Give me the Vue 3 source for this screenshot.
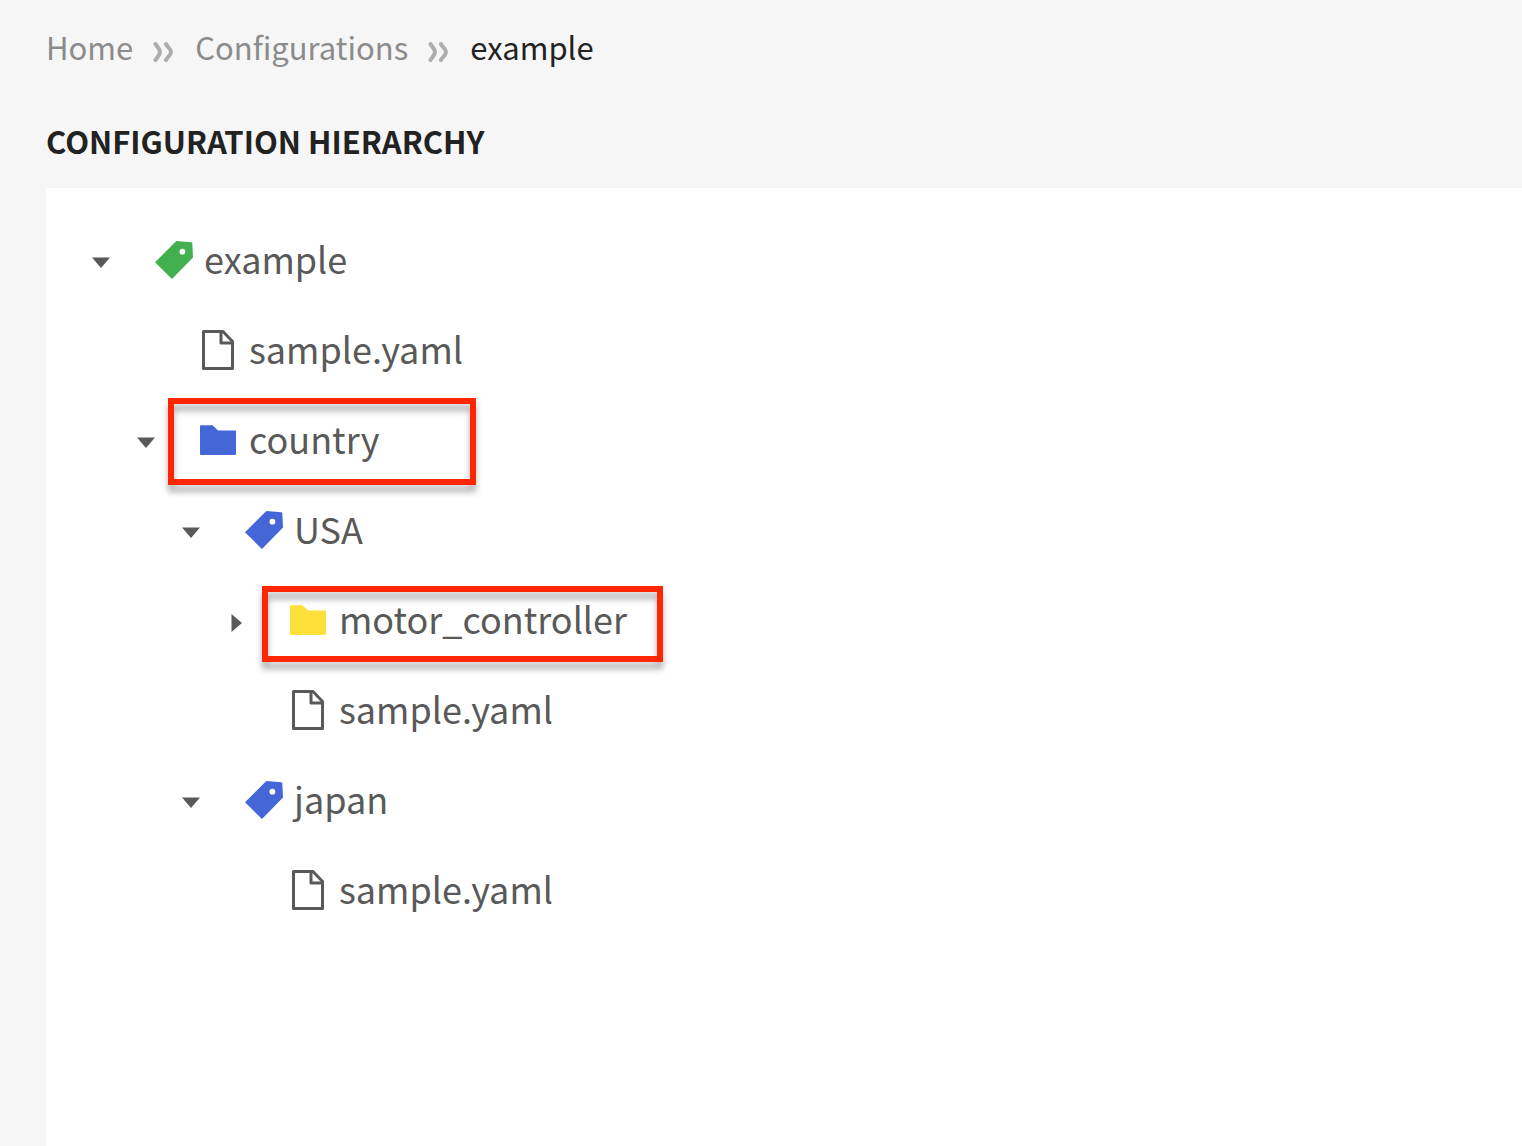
<script setup>
import { computed, reactive } from 'vue'

const nodes = [
  { id: 'example', parent: null, depth: 0, kind: 'tag', tone: 'green', label: 'example' },
  { id: 'root-file', parent: 'example', depth: 1, kind: 'file', label: 'sample.yaml' },
  { id: 'country', parent: 'example', depth: 1, kind: 'folder', tone: 'blue', label: 'country', mark: 'tall' },
  { id: 'usa', parent: 'country', depth: 2, kind: 'tag', tone: 'blue', label: 'USA' },
  { id: 'motor', parent: 'usa', depth: 3, kind: 'folder', tone: 'yellow', label: 'motor_controller', mark: 'wide' },
  { id: 'usa-file', parent: 'usa', depth: 3, kind: 'file', label: 'sample.yaml' },
  { id: 'japan', parent: 'country', depth: 2, kind: 'tag', tone: 'blue', label: 'japan' },
  { id: 'japan-file', parent: 'japan', depth: 3, kind: 'file', label: 'sample.yaml' }
]

const open = reactive({ example: true, country: true, usa: true, motor: false, japan: true })
const byId = Object.fromEntries(nodes.map((n) => [n.id, n]))

function isVisible(node) {
  return node.parent === null || (open[node.parent] && isVisible(byId[node.parent]))
}

const visible = computed(() => nodes.filter(isVisible))
</script>

<template>
  <div class="page">
    <nav class="crumbs" aria-label="Breadcrumb">
      <a href="#home">Home</a>
      <svg class="chevrons" viewBox="0 0 22 22" aria-hidden="true">
        <path d="M2.500 3 C4 6 7 8 7 11 C7 14 4 16 2.500 19 M13 3 C14.500 6 18 8 18 11 C18 14 14.500 16 13 19" />
      </svg>
      <a href="#configurations">Configurations</a>
      <svg class="chevrons" viewBox="0 0 22 22" aria-hidden="true">
        <path d="M2.500 3 C4 6 7 8 7 11 C7 14 4 16 2.500 19 M13 3 C14.500 6 18 8 18 11 C18 14 14.500 16 13 19" />
      </svg>
      <span class="current" aria-current="page">example</span>
    </nav>

    <h1>CONFIGURATION HIERARCHY</h1>

    <main class="panel">
      <ul class="tree" role="tree" aria-label="Configuration hierarchy">
        <li
          v-for="node in visible"
          :key="node.id"
          class="row"
          role="treeitem"
          :aria-level="node.depth + 1"
          :aria-expanded="node.kind === 'file' ? undefined : open[node.id]"
          :style="{ paddingLeft: node.depth * 45 + 'px' }"
        >
          <span class="slot">
            <button
              v-if="node.kind !== 'file'"
              type="button"
              class="toggle"
              :aria-label="'Toggle ' + node.label"
              @click="open[node.id] = !open[node.id]"
            >
              <svg viewBox="0 0 32 32" aria-hidden="true">
                <path v-if="open[node.id]" d="M7 11.5 H25 L16 22 Z" />
                <path v-else d="M11.500 8 L22 17 L11.500 26 Z" />
              </svg>
            </button>
          </span>
          <span class="item">
            <svg class="icon" :class="node.tone" viewBox="0 0 40 40" aria-hidden="true">
              <path
                v-if="node.kind === 'tag'"
                fill-rule="evenodd"
                d="M22.300 1 L37.300 2.200 Q38.200 2.300 38.300 3.200 L39 17.500 L18 39 L1 22.300 Z M28.400 8.800 a2.900 2.900 0 1 0 0 5.800 a2.900 2.900 0 1 0 0 -5.800 Z"
              />
              <path
                v-else-if="node.kind === 'folder'"
                d="M2 5.300 H13.500 L19 10.500 H36 Q37 10.500 37 11.500 V34 Q37 35 36 35 H2 Q1 35 1 34 V6.300 Q1 5.300 2 5.300 Z"
              />
              <g v-else class="outline">
                <path d="M4.500 1.500 H24 L33.500 11.500 V38.500 H4.500 Z" />
                <path d="M22 1.500 V13 H33.500" />
              </g>
            </svg>
            <span class="label">{{ node.label }}</span>
            <span v-if="node.mark" class="mark" :class="node.mark"></span>
          </span>
        </li>
      </ul>
    </main>
  </div>
</template>

<style>
body {
  margin: 0;
  background: #f6f6f6;
}
</style>

<style scoped>
.page {
  display: flex;
  flex-direction: column;
  box-sizing: border-box;
  min-height: 100vh;
  padding-left: 46px;
  font-family: "Noto Sans CJK SC", "Noto Sans", sans-serif;
  color: #222;
}

.crumbs {
  display: flex;
  align-items: center;
  gap: 20px;
  padding-top: 23px;
  font-size: 31px;
  line-height: 48px;
}

.crumbs a {
  color: #8b8b8b;
  text-decoration: none;
}

.chevrons {
  width: 22px;
  height: 22px;
  margin-top: 9px;
  fill: none;
  stroke: #adadad;
  stroke-width: 4;
  stroke-linecap: round;
}

h1 {
  margin: 46px 0 23px;
  font-size: 31px;
  line-height: 48px;
  font-weight: 700;
}

.panel {
  flex: 1;
  padding: 29px 0 28px 39px;
  background: #fff;
}

.tree {
  margin: 0;
  padding: 0;
  list-style: none;
}

.row {
  display: flex;
  align-items: center;
  gap: 37px;
  height: 90px;
}

.slot {
  flex: none;
  width: 32px;
  height: 32px;
}

.toggle {
  display: block;
  width: 32px;
  height: 32px;
  padding: 0;
  border: 0;
  background: none;
  cursor: pointer;
}

.toggle svg {
  display: block;
  width: 32px;
  height: 32px;
  fill: #595959;
}

.item {
  position: relative;
  display: flex;
  align-items: center;
  gap: 10px;
  height: 90px;
}

.icon {
  flex: none;
  width: 40px;
  height: 40px;
  margin-bottom: 4px;
}

.green { fill: #42b04f; }
.blue { fill: #4466d6; }
.yellow { fill: #ffdf3a; }

.outline {
  fill: none;
  stroke: #595959;
  stroke-width: 3;
  stroke-linejoin: round;
}

.label {
  margin-bottom: 8px;
  font-size: 36px;
  line-height: 54px;
  color: #595959;
  white-space: nowrap;
}

.mark {
  position: absolute;
  box-sizing: border-box;
  border: 6px solid #ff2600;
  filter: drop-shadow(0 7px 3px rgba(0, 0, 0, 0.3));
  pointer-events: none;
}

.tall {
  top: 1px;
  left: -31px;
  width: 308px;
  height: 87px;
}

.wide {
  top: 9px;
  left: -27px;
  width: 401px;
  height: 76px;
}
</style>
